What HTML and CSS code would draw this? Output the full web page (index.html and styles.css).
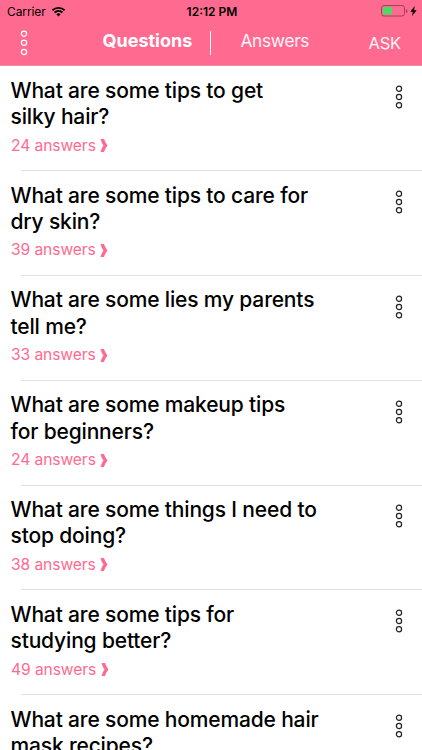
FILE: index.html
```
<!DOCTYPE html>
<html lang="en">
<head>
<meta charset="utf-8">
<title>Questions</title>
<link rel="stylesheet" href="styles.css">
</head>
<body>
<header class="header">
  <div class="status">
    <div class="carrier"><span>Carrier</span>
      <svg class="wifi" viewBox="0 0 16 12"><path d="M1.3 4.6a10 10 0 0 1 13.4 0M3.7 7.1a6.4 6.4 0 0 1 8.6 0" fill="none" stroke="#000" stroke-width="2"/><path d="M5.6 9a3.6 3.6 0 0 1 4.8 0L8 11.5z"/></svg>
    </div>
    <div class="time">12:12 PM</div>
    <div class="power">
      <svg class="battery" viewBox="0 0 27 12"><rect x=".5" y=".5" width="23" height="10.5" rx="2.5" fill="none" stroke="#9e4259"/><rect x="2" y="2" width="9" height="7.5" rx=".5" fill="#4cd964"/><path d="M25 4v4q1.500-.5 1.500-2T25 4" fill="#9e4259"/></svg>
      <svg class="bolt" viewBox="0 0 7 10"><path d="M4.7 0 .3 5.7h2.6L2 10l4.7-5.8H4z"/></svg>
    </div>
  </div>
  <nav class="nav">
    <svg class="dots light" viewBox="0 0 8 26"><circle cx="4" cy="3.7" r="2.6"/><circle cx="4" cy="12.8" r="2.6"/><circle cx="4" cy="22" r="2.6"/></svg>
    <span class="tab active">Questions</span>
    <span class="divider"></span>
    <span class="tab">Answers</span>
    <span class="ask">ASK</span>
  </nav>
</header>
<main class="list" id="list"></main>
<script src="list.js"></script>
</body>
</html>
```
FILE: styles.css
```
* { box-sizing: border-box; }
body { margin: 0; height: 750px; overflow: hidden; background: #fff; color: #000; font-family: Inter, sans-serif; }
.header { height: 66px; background: #ff6b90; border-bottom: 1px solid #f58ba5; }
.status { height: 22px; display: grid; grid-template-columns: 1fr auto 1fr; align-items: center; padding: 0 5px 0 7px; font-size: 12px; }
.carrier, .power { display: flex; align-items: center; }
.carrier { gap: 5px; }
.carrier span { letter-spacing: -.1px; }
.power { justify-content: flex-end; gap: 2px; }
.time { font-weight: 600; }
.wifi { width: 15px; height: 11px; }
.battery { width: 27px; height: 12px; }
.bolt { width: 7px; height: 10px; }
.nav { height: 43px; display: grid; grid-template-columns: 82.5px 107.5px 1px 111px 1fr; padding-left: 20px; color: #fff; font-size: 18px; }
.dots { width: 8px; height: 26px; fill: none; stroke: #222; stroke-width: 1.2; }
.light { stroke: #fff; margin-top: 8px; }
.tab { line-height: 38px; }
.tab + .divider + .tab { padding-left: 29.5px; font-size: 17.3px; letter-spacing: -.3px; opacity: .93; }
.active { font-weight: 700; }
.divider { width: 1px; height: 24px; margin-top: 9px; background: #fff; }
.ask { line-height: 43px; padding-left: 46.5px; font-size: 16.5px; letter-spacing: -.2px; opacity: .93; }
.list { height: 684px; overflow: hidden; }
.row { height: 104.85px; display: flex; justify-content: space-between; padding: 11.7px 18.7px 0 10.5px; background: linear-gradient(#e2e2e4, #e2e2e4) 21px 104px / 401px 1px no-repeat; }
.row .dots { margin-top: 6.3px; }
.question { margin: 0; font-size: 21px; line-height: 26.4px; font-weight: 500; letter-spacing: -.16px; white-space: nowrap; }
.answers { margin: 5px 0 0 .5px; color: #ff6b90; font-size: 15.6px; letter-spacing: -.08px; line-height: 20px; display: flex; align-items: center; gap: 4.4px; }
.chevron { width: 8px; height: 13px; fill: #ff6b90; }
```
FILE: list.js
```
const questions = [
  ["What are some tips to get", "silky hair?", 24],
  ["What are some tips to care for", "dry skin?", 39],
  ["What are some lies my parents", "tell me?", 33],
  ["What are some makeup tips", "for beginners?", 24],
  ["What are some things I need to", "stop doing?", 38],
  ["What are some tips for", "studying better?", 49],
  ["What are some homemade hair", "mask recipes?"]
];
document.getElementById("list").innerHTML = questions.map(([a, b, n]) => `
<article class="row">
  <div>
    <h2 class="question"><span>${a}</span><br><span>${b}</span></h2>
    ${n ? `<p class="answers"><span>${n} answers</span><svg class="chevron" viewBox="0 0 8 13"><path d="M.5 0H4Q5 3.500 7.500 6.500Q5 9.500 4 13H.5Q1.500 9 3.500 6.500Q1.500 4 .5 0"/></svg></p>` : ""}
  </div>
  <svg class="dots" viewBox="0 0 8 26"><circle cx="4" cy="4.7" r="2.6"/><circle cx="4" cy="13" r="2.6"/><circle cx="4" cy="21.3" r="2.6"/></svg>
</article>`).join("");
```
